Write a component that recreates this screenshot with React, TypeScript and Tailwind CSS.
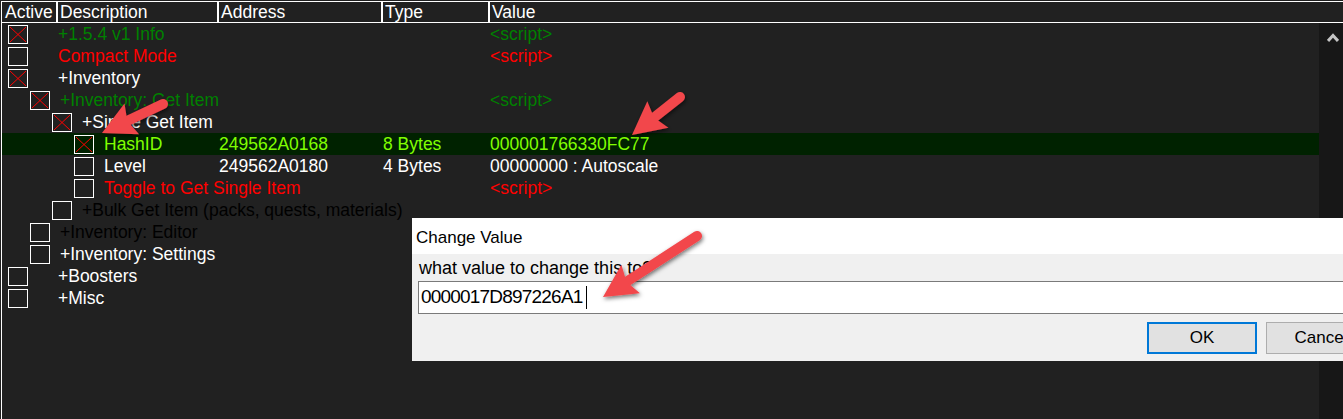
import React from "react";

type Row = {
  lvl: number;
  chk: boolean;
  desc: string;
  color: string;
  addr?: string;
  type?: string;
  value?: string;
  hl?: boolean;
};

const rows: Row[] = [
  { lvl: 0, chk: true, desc: "+1.5.4 v1 Info", color: "text-[#008000]", value: "<script>" },
  { lvl: 0, chk: false, desc: "Compact Mode", color: "text-[#ff0000]", value: "<script>" },
  { lvl: 0, chk: true, desc: "+Inventory", color: "text-white" },
  { lvl: 1, chk: true, desc: "+Inventory: Get Item", color: "text-[#008000]", value: "<script>" },
  { lvl: 2, chk: true, desc: "+Single Get Item", color: "text-white" },
  {
    lvl: 3,
    chk: true,
    desc: "HashID",
    color: "text-[#80ff00]",
    addr: "249562A0168",
    type: "8 Bytes",
    value: "000001766330FC77",
    hl: true,
  },
  {
    lvl: 3,
    chk: false,
    desc: "Level",
    color: "text-white",
    addr: "249562A0180",
    type: "4 Bytes",
    value: "00000000 : Autoscale",
  },
  { lvl: 3, chk: false, desc: "Toggle to Get Single Item", color: "text-[#ff0000]", value: "<script>" },
  { lvl: 2, chk: false, desc: "+Bulk Get Item (packs, quests, materials)", color: "text-black" },
  { lvl: 1, chk: false, desc: "+Inventory: Editor", color: "text-black" },
  { lvl: 1, chk: false, desc: "+Inventory: Settings", color: "text-white" },
  { lvl: 0, chk: false, desc: "+Boosters", color: "text-white" },
  { lvl: 0, chk: false, desc: "+Misc", color: "text-white" },
];

const padClass = ["pl-[6px]", "pl-[28px]", "pl-[50px]", "pl-[72px]"];

function Check({ on }: { on: boolean }) {
  return (
    <svg width="20" height="19" viewBox="0 0 20 19" className="block">
      <rect x="0.5" y="0.5" width="19" height="18" fill="none" stroke="#ffffff" strokeWidth="1" />
      {on && (
        <>
          <line x1="2" y1="2" x2="18" y2="17" stroke="#ff0000" strokeWidth="1" />
          <line x1="18" y1="2" x2="2" y2="17" stroke="#ff0000" strokeWidth="1" />
        </>
      )}
    </svg>
  );
}

function Arrow({ tx, ty, px, py }: { tx: number; ty: number; px: number; py: number }) {
  const dx = px - tx;
  const dy = py - ty;
  const len = Math.sqrt(dx * dx + dy * dy);
  const ux = dx / len;
  const uy = dy / len;
  const nx = -uy;
  const ny = ux;
  const L = 30;
  const H = 17;
  const bx = px - ux * L;
  const by = py - uy * L;
  const w1x = bx + nx * H - ux * 3;
  const w1y = by + ny * H - uy * 3;
  const w2x = bx - nx * H - ux * 3;
  const w2y = by - ny * H - uy * 3;
  const sx = bx + ux * 4;
  const sy = by + uy * 4;
  return (
    <g filter="url(#shadow)">
      <line x1={tx} y1={ty} x2={sx} y2={sy} stroke="#f2474b" strokeWidth="10" strokeLinecap="round" />
      <polygon points={`${px},${py} ${w1x},${w1y} ${bx + ux * 2},${by + uy * 2} ${w2x},${w2y}`} fill="#f2474b" />
    </g>
  );
}

export default function App() {
  return (
    <div
      className="relative h-[419px] w-[1343px] overflow-hidden bg-[#212121] pl-[1px] pt-[1px]"
      style={{ fontFamily: "'Liberation Sans', Arial, sans-serif" }}
    >
      <div className="flex h-[418px] flex-col border-l border-white">
        {/* header */}
        <div className="flex h-[22px] shrink-0 border-y border-white text-[17.5px] leading-[20px] text-white">
          <div className="w-[54px] shrink-0 pl-[3px]">Active</div>
          <div className="w-[161px] shrink-0 border-l-2 border-white pl-[2px]">Description</div>
          <div className="w-[164px] shrink-0 border-l-2 border-white pl-[2px]">Address</div>
          <div className="w-[107px] shrink-0 border-l-2 border-white pl-[2px]">Type</div>
          <div className="flex-1 border-l-2 border-white pl-[2px]">Value</div>
        </div>
        {/* body */}
        <div className="flex flex-1">
          <div className="flex-1 text-[17.5px]">
            {rows.map((r, i) => (
              <div
                key={i}
                className={`flex h-[22px] items-center whitespace-nowrap ${r.hl ? "bg-[#002200]" : ""} ${r.color}`}
              >
                <div className="flex w-[217px] shrink-0 items-center">
                  <div className={padClass[r.lvl]}>
                    <Check on={r.chk} />
                  </div>
                  <span className={r.lvl === 0 ? "ml-[30px]" : "ml-[10px]"}>{r.desc}</span>
                </div>
                <div className="w-[164px] shrink-0">{r.addr ?? ""}</div>
                <div className="w-[107px] shrink-0">{r.type ?? ""}</div>
                <div className="flex-1">{r.value ?? ""}</div>
              </div>
            ))}
          </div>
          <div className="flex w-[24px] shrink-0 justify-center bg-[#171717] pt-[10px]">
            <svg width="12" height="9" viewBox="0 0 12 9" className="ml-[3px] block">
              <polyline points="1,8 6,2.5 11,8" fill="none" stroke="#c4c4c4" strokeWidth="3" />
            </svg>
          </div>
        </div>
      </div>

      {/* dialog */}
      <div className="absolute left-[412px] top-[218px] w-[974px]">
        <div className="flex h-[36px] items-center bg-white pl-[4px] pt-[3px] text-[17px] text-[#000000]">
          Change Value
        </div>
        <div className="bg-[#f0f0f0] px-[6px] pb-[7px] pt-[3px]">
          <div className="h-[22px] pl-[1px] text-[18px] leading-[22px] text-black">what value to change this to?</div>
          <div className="mt-[2px] flex h-[33px] items-center border border-[#7a7a7a] bg-white pl-[2px] text-[19px] tracking-[-0.8px] text-black">
            <span>0000017D897226A1</span>
            <span className="ml-[3px] inline-block h-[23px] w-[1px] bg-black" />
          </div>
          <div className="mt-[8px] flex justify-end gap-[9px] pr-[4px]">
            <div className="flex h-[32px] w-[110px] items-center justify-center border-2 border-[#0078d7] bg-[#e1e1e1] text-[17px] text-black">
              OK
            </div>
            <div className="flex h-[32px] w-[110px] items-center justify-center border border-[#adadad] bg-[#e1e1e1] text-[17px] text-black">
              Cancel
            </div>
          </div>
        </div>
      </div>

      {/* arrows */}
      <svg className="pointer-events-none absolute left-0 top-0" width="1343" height="419" viewBox="0 0 1343 419">
        <defs>
          <filter id="shadow" x="-20%" y="-20%" width="140%" height="140%">
            <feDropShadow dx="1" dy="2" stdDeviation="2" floodColor="#000000" floodOpacity="0.55" />
          </filter>
        </defs>
        <Arrow tx={163} ty={104} px={102} py={133} />
        <Arrow tx={680} ty={97} px={632} py={135} />
        <Arrow tx={697} ty={236} px={603} py={297} />
      </svg>
    </div>
  );
}
